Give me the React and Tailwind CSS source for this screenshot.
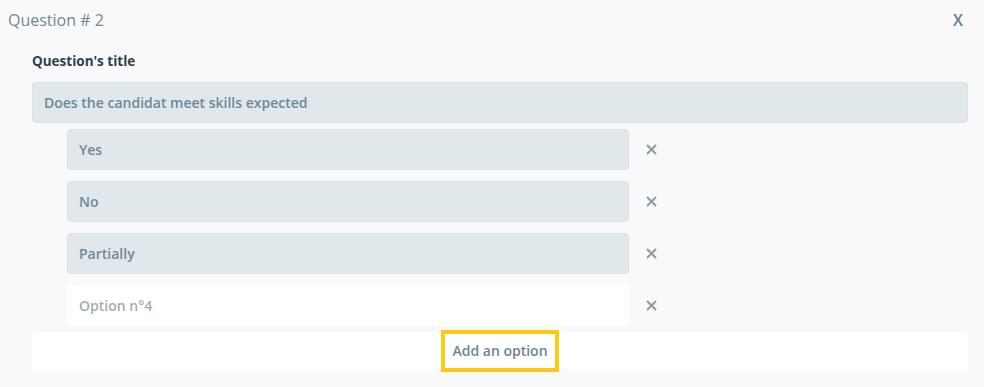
import React from "react";

const options = ["Yes", "No", "Partially"];

function RemoveButton() {
  return (
    <button className="w-[44px] flex items-center justify-center text-[#8a9ba6]">
      <svg width="11" height="11" viewBox="0 0 11 11">
        <path d="M1 1L10 10M10 1L1 10" stroke="currentColor" strokeWidth="2" />
      </svg>
    </button>
  );
}

export default function App() {
  return (
    <div
      className="w-[984px] h-[387px] bg-[#f9f9f9] text-[#6c8595]"
      style={{ fontFamily: "'Open Sans', sans-serif" }}
    >
      <div className="flex items-center justify-between pl-[8px] pr-[21px] pt-[6px] h-[34px]">
        <h2 className="text-[16px] text-[#6f8797]">Question # 2</h2>
        <button className="text-[16px] font-semibold text-[#5e7f97]">X</button>
      </div>

      <div className="pl-[32px] pr-[16px] pt-[19px]">
        <label className="block text-[13.5px] font-bold text-[#2e4150] mb-[13px] leading-[16px]">
          Question's title
        </label>
        <div className="h-[41px] rounded-[4px] bg-[#e1e8ec] border border-[#dae2e7] flex items-center px-[11px] text-[14px] font-semibold text-[#6f8898]">
          Does the candidat meet skills expected
        </div>

        <div className="flex flex-col gap-[11px] pt-[6px] pl-[35px]">
          {options.map((o) => (
            <div key={o} className="flex items-center">
              <div className="w-[562px] h-[41px] rounded-[4px] bg-[#e1e8ec] border border-[#dae2e7] flex items-center px-[11px] text-[14px] font-semibold text-[#6f8898]">
                {o}
              </div>
              <RemoveButton />
            </div>
          ))}
          <div className="flex items-center">
            <div className="w-[562px] h-[41px] rounded-[4px] bg-white flex items-center px-[12px] text-[14px] font-semibold text-[#9fadb6]">
              Option n°4
            </div>
            <RemoveButton />
          </div>
        </div>

        <div className="mt-[6px] h-[37px] rounded-[4px] bg-white flex items-center justify-center">
          <span className="border-[4px] border-[#ffc913] px-[7px] py-[7px] text-[14px] font-semibold text-[#6c8595] leading-[20px]">
            Add an option
          </span>
        </div>
      </div>
    </div>
  );
}
